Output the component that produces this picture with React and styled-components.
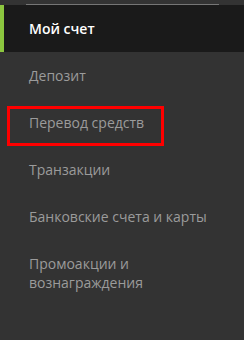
import React from "react";
import styled, { createGlobalStyle } from "styled-components";

const Global = createGlobalStyle`
  html, body { margin: 0; padding: 0; background: #333333; }
  body { font-family: "Open Sans", "Liberation Sans", sans-serif; }
`;

const Sidebar = styled.nav`
  position: relative;
  width: 244px;
  height: 340px;
  background: #333333;
  padding-top: 4px;
  box-sizing: border-box;
`;

const Divider = styled.div`
  height: 1px;
  width: 193px;
  margin-left: 26px;
  background: #767676;
`;

const List = styled.ul`
  list-style: none;
  margin: 0;
  padding: 0;
  display: flex;
  flex-direction: column;
`;

const Item = styled.li`
  box-sizing: border-box;
  min-height: 47px;
  padding: 14px 20px 14px ${(p) => (p.$active ? 25 : 29)}px;
  border-left: ${(p) => (p.$active ? "4px solid #8cc63f" : "none")};
  background: ${(p) => (p.$active ? "#1a1a1a" : "transparent")};
  color: ${(p) => (p.$active ? "#ffffff" : "#9b9b9b")};
  font-size: 14px;
  line-height: 19px;
  font-weight: ${(p) => (p.$active ? 600 : 400)};
`;

const Highlight = styled.div`
  position: absolute;
  left: 7px;
  top: 106px;
  width: 157px;
  height: 40px;
  box-sizing: border-box;
  border: 3px solid #ff0000;
  pointer-events: none;
`;

const items = [
  { label: "Мой счет", active: true },
  { label: "Депозит" },
  { label: "Перевод средств" },
  { label: "Транзакции" },
  { label: "Банковские счета и карты" },
  { label: "Промоакции и\nвознаграждения" },
];

export default function App() {
  return (
    <>
      <Global />
      <Sidebar>
        <Divider />
        <List>
          {items.map((it) => (
            <Item key={it.label} $active={it.active}>
              {it.label.split("\n").map((l, i) => (
                <React.Fragment key={i}>
                  {i > 0 && <br />}
                  {l}
                </React.Fragment>
              ))}
            </Item>
          ))}
        </List>
        <Highlight />
      </Sidebar>
    </>
  );
}
